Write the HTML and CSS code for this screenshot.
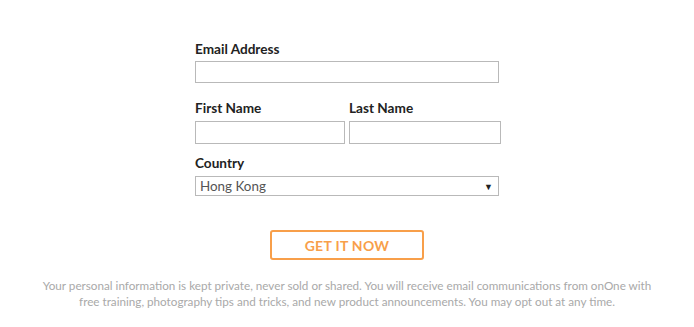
FILE: index.html
```html
<!DOCTYPE html>
<html>
<head>
<meta charset="utf-8">
<link rel="stylesheet" href="styles.css">
</head>
<body>
<div class="page">
  <form class="form">
    <div class="field">
      <label class="label">Email Address</label>
      <div class="input"></div>
    </div>
    <div class="row">
      <div class="field half">
        <label class="label">First Name</label>
        <div class="input"></div>
      </div>
      <div class="field half last">
        <label class="label">Last Name</label>
        <div class="input"></div>
      </div>
    </div>
    <div class="field country">
      <label class="label">Country</label>
      <div class="select"><span>Hong Kong</span><span class="arrow">▼</span></div>
    </div>
    <div class="actions">
      <div class="button">GET IT NOW</div>
    </div>
  </form>
  <p class="note">Your personal information is kept private, never sold or shared. You will receive email communications from onOne with<br>free training, photography tips and tricks, and new product announcements. You may opt out at any time.</p>
</div>
</body>
</html>
```
FILE: styles.css
```css
html, body {
  margin: 0;
  padding: 0;
  background: #fff;
}
body {
  font-family: Lato, "Open Sans", sans-serif;
  width: 694px;
  height: 327px;
  overflow: hidden;
}
.page {
  display: flex;
  flex-direction: column;
  align-items: center;
  padding-top: 41px;
}
.form {
  width: 306px;
  display: flex;
  flex-direction: column;
  margin-left: 2px;
}
.field {
  display: flex;
  flex-direction: column;
}
.label {
  font-weight: bold;
  font-size: 13.6px;
  color: #222;
  line-height: 16px;
  height: 16px;
  margin-bottom: 4px;
}
.input {
  height: 22px;
  box-sizing: border-box;
  width: 304px;
  border: 1px solid #b9b9b9;
  background: #fff;
  margin-bottom: 17px;
}
.row {
  display: flex;
  gap: 4px;
}
.half .label {
  margin-bottom: 5px;
}
.half .input {
  width: 150px;
  height: 23px;
  margin-bottom: 11px;
}
.half.last .input {
  width: 152px;
}
.country .label {
  margin-bottom: 5px;
}
.select {
  width: 304px;
  height: 20px;
  box-sizing: border-box;
  border: 1px solid #b9b9b9;
  display: flex;
  align-items: center;
  justify-content: space-between;
  padding: 0 5px 0 4px;
  font-size: 13.4px;
  color: #555;
}
.arrow {
  font-size: 9px;
  color: #222;
}
.actions {
  display: flex;
  justify-content: center;
  margin-top: 34px;
  padding-right: 2px;
}
.button {
  width: 154px;
  height: 30px;
  box-sizing: border-box;
  border: 2px solid #f89f4a;
  border-radius: 3px;
  color: #f89f4a;
  font-weight: bold;
  font-size: 14px;
  display: flex;
  align-items: center;
  justify-content: center;
  letter-spacing: 0.3px;
}
.note {
  margin: 17px 0 0;
  text-align: center;
  font-size: 11.7px;
  line-height: 16px;
  color: #a9a9a9;
}
```
